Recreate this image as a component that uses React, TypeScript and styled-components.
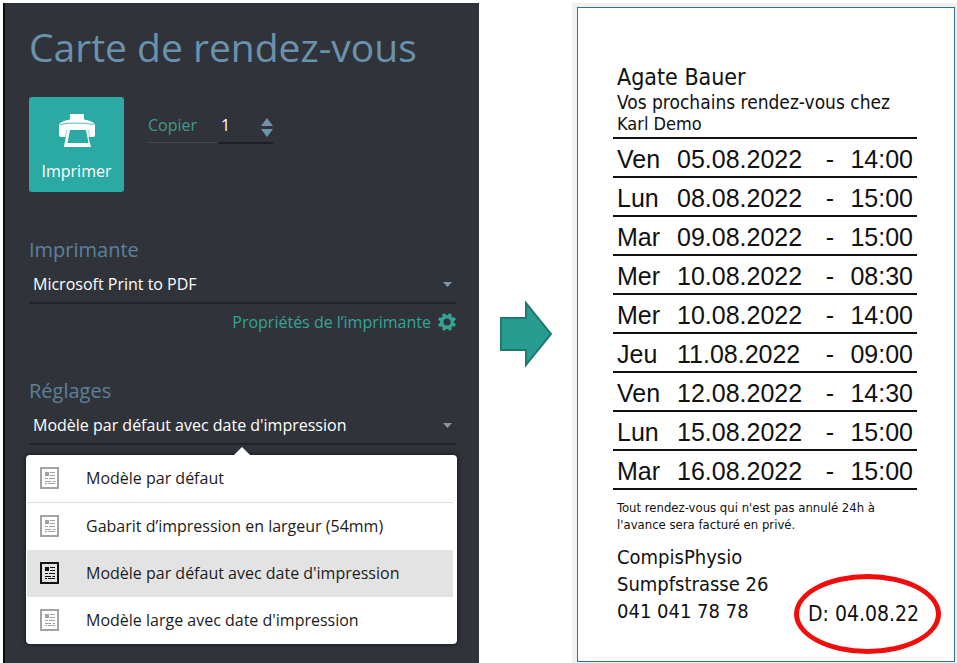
import React, { useState } from "react";
import styled, { createGlobalStyle } from "styled-components";

const GlobalStyle = createGlobalStyle`
  *, *::before, *::after { box-sizing: border-box; }
  body {
    margin: 0;
    background: #ffffff;
    font-family: "Open Sans", "Noto Sans", sans-serif;
  }
  button, input, select { font: inherit; color: inherit; }
`;

const Page = styled.div`
  display: grid;
  grid-template-columns: 476fr 93fr 385fr;
  min-height: 100vh;
  padding: 3px 0 0 3px;
`;

const Panel = styled.main`
  background: #30343a;
  border-left: 2px solid #0a0c0f;
  padding: 16px 23px 19px 24px;
`;

const Title = styled.h1`
  margin: 0;
  font-size: 39px;
  line-height: 56px;
  font-weight: 400;
  color: #6a92ad;
  white-space: nowrap;
`;

const PrintRow = styled.div`
  display: flex;
  align-items: flex-start;
  gap: 24px;
  margin-top: 22px;
`;

const PrintButton = styled.button`
  width: 95px;
  height: 95px;
  border: 0;
  border-radius: 3px;
  padding: 17px 0 9px;
  background: #2baaa3;
  color: #ffffff;
  display: flex;
  flex-direction: column;
  align-items: center;
  justify-content: space-between;
  font-size: 16px;
  line-height: 24px;
  cursor: pointer;
`;

const CopyField = styled.div`
  display: flex;
  align-items: stretch;
  height: 33px;
  margin-top: 14px;
  font-size: 16px;
  line-height: 28px;
`;

const CopyLabel = styled.label`
  width: 70px;
  height: 32px;
  color: #43968c;
  border-bottom: 1px solid #41454c;
`;

const CopyBox = styled.div`
  display: flex;
  align-items: flex-start;
  width: 55px;
  border-bottom: 2px solid #1d2025;
`;

const CopyInput = styled.input`
  flex: 1;
  width: 0;
  padding: 0 0 0 3px;
  border: 0;
  outline: 0;
  background: transparent;
  color: #ffffff;
  height: 28px;
`;

const Stepper = styled.div`
  display: flex;
  flex-direction: column;
  gap: 3px;
  padding-top: 7px;
`;

const StepButton = styled.button`
  border: 0;
  padding: 0;
  background: none;
  color: #6f94ac;
  display: flex;
  cursor: pointer;
`;

const FieldLabel = styled.label`
  display: block;
  font-size: 20px;
  line-height: 28px;
  color: #5d809b;
`;

const PrinterField = styled.section`
  margin-top: 44px;
`;

const SettingsField = styled.section`
  margin-top: 41px;
`;

const SelectBox = styled.div`
  display: flex;
  align-items: center;
  height: 40px;
  padding: 2px 4px 0;
  border-bottom: 2px solid #20242a;
  color: #7e98ab;
`;

const Select = styled.select`
  flex: 1;
  min-width: 0;
  height: 28px;
  appearance: none;
  border: 0;
  outline: 0;
  padding: 0;
  background: transparent;
  color: #ffffff;
  font-size: 16px;
  line-height: 28px;
`;

const PropertiesLink = styled.a`
  display: flex;
  justify-content: flex-end;
  align-items: center;
  gap: 7px;
  height: 28px;
  margin-top: 4px;
  font-size: 16px;
  line-height: 28px;
  color: #36a397;
  text-decoration: none;
`;

const Menu = styled.ul`
  position: relative;
  list-style: none;
  margin: 10px -1px 0 -3px;
  padding: 0 4px 0 1px;
  background: #ffffff;
  border-radius: 4px;
  box-shadow: 0 0 4px 1px rgba(0, 0, 0, 0.45);

  &::before {
    content: "";
    position: absolute;
    top: -8px;
    left: 50%;
    margin-left: -8px;
    border: 8px solid transparent;
    border-top: 0;
    border-bottom-color: #ffffff;
  }
`;

const MenuItem = styled.li<{ $divided?: boolean }>`
  border-bottom: ${(p) => (p.$divided ? "1px solid #dcdcdc" : "0")};
`;

const MenuButton = styled.button<{ $active: boolean }>`
  display: flex;
  align-items: center;
  gap: 26px;
  width: 100%;
  height: 47px;
  border: 0;
  padding: 0 12px 2px 13px;
  text-align: left;
  background: ${(p) => (p.$active ? "#e3e3e3" : "transparent")};
  color: #1c1c1c;
  font-size: 16px;
  line-height: 24px;
  cursor: pointer;

  svg { color: ${(p) => (p.$active ? "#111111" : "#a3a3a3")}; flex: none; }
`;

const ArrowCell = styled.div`
  padding: 297px 0 0 21px;
`;

const Preview = styled.section`
  background: #f3f1ef;
  padding: 4px 2px 1px 5px;
  display: flex;
`;

const Card = styled.article`
  flex: 1;
  border: 1px solid #2f6fa5;
  background: #ffffff;
  color: #111111;
  padding: 55px 37px 0 35px;
  font-family: "DejaVu Sans Condensed", "DejaVu Sans", sans-serif;
`;

const CardText = styled.p<{ $size: number; $line: number }>`
  margin: 0;
  padding-left: 4px;
  font-size: ${(p) => p.$size}px;
  line-height: ${(p) => p.$line}px;
  white-space: nowrap;
`;

const Appointments = styled.table`
  width: 100%;
  border-collapse: collapse;
  border-top: 2px solid #111111;
  margin: 2px 0 9px;
  font-family: "Liberation Sans", Arial, sans-serif;
  font-size: 25px;
  line-height: 34px;

  tr { border-bottom: 2px solid #111111; }
  td, th { padding: 3px 0 0; font-weight: 400; text-align: left; white-space: nowrap; }
  th { width: 64px; padding-left: 4px; }
  td:nth-child(3) { text-align: right; }
  td:nth-child(4) { text-align: right; width: 83px; padding-right: 4px; }
`;

const Footer = styled.footer`
  display: flex;
  justify-content: space-between;
  align-items: flex-start;
  margin-top: 11px;
  margin-right: -2px;
`;

const Address = styled.address`
  font-style: normal;
`;

const PrintDate = styled.div`
  position: relative;
  margin-top: 56px;
  font-size: 21px;
  line-height: 28px;
  white-space: nowrap;

  &::after {
    content: "";
    position: absolute;
    inset: -26px -22px -26px -14px;
    border: 5px solid #f20d0d;
    border-radius: 50%;
  }
`;

const PrinterIcon = () => (
  <svg width="36" height="33" viewBox="0 0 36 33" aria-hidden="true">
    <path d="M11 0h14v5.500c5 .8 9 2 11 5V21q0 2-2 2h-4.600L32 33H5l1.600-10H2q-2 0-2-2V10.500c2-3 6-4.200 11-5z" fill="#fff" />
    <path d="M1 10.600Q9 9 18 9t17 1.600" stroke="#2baaa3" strokeWidth="0.800" fill="none" />
    <path d="M11 16h16l2.500 13h-21z" fill="#2baaa3" />
    <path d="M7.500 16L5.800 28M29.500 16l1.700 12" stroke="#2baaa3" strokeWidth="0.500" />
  </svg>
);

const Triangle = ({ up = false, size = 12, height = 8 }: { up?: boolean; size?: number; height?: number }) => (
  <svg width={size} height={height} viewBox="0 0 12 8" preserveAspectRatio="none" aria-hidden="true">
    <path d={up ? "M0 8L6 0l6 8z" : "M0 0h12L6 8z"} fill="currentColor" />
  </svg>
);

const GearIcon = () => (
  <svg width="18" height="18" viewBox="0 0 18 18" aria-hidden="true">
    <circle cx="9" cy="9" r="5.300" fill="none" stroke="currentColor" strokeWidth="3.400" />
    {[22, 67, 112, 157, 202, 247, 292, 337].map((a) => (
      <path key={a} d="M7 3L7.600 0h2.800L11 3z" fill="currentColor" transform={`rotate(${a} 9 9)`} />
    ))}
  </svg>
);

const TemplateIcon = () => (
  <svg width="20" height="22" viewBox="0 0 20 22" aria-hidden="true">
    <rect x="1" y="1" width="17" height="20" fill="none" stroke="currentColor" strokeWidth="2" />
    <path d="M5 5h4v4H5z" fill="currentColor" />
    <path d="M10 5.500h5M10 8.500h5M5 11.500h3M9 11.500h6M5 14.500h6M12.500 14.500h2.500M5 16.500h2M8 16.500h7" stroke="currentColor" strokeWidth="1" />
  </svg>
);

const BigArrow = () => (
  <svg width="53" height="69" viewBox="0 0 53 69" aria-hidden="true">
    <path d="M1 18h25V3l25 31-25 31V50H1z" fill="#279c91" stroke="#1f7a70" strokeWidth="2" />
  </svg>
);

const templates = [
  "Modèle par défaut",
  "Gabarit d’impression en largeur (54mm)",
  "Modèle par défaut avec date d'impression",
  "Modèle large avec date d'impression",
];

const appointments = [
  ["Ven", "05.08.2022", "14:00"],
  ["Lun", "08.08.2022", "15:00"],
  ["Mar", "09.08.2022", "15:00"],
  ["Mer", "10.08.2022", "08:30"],
  ["Mer", "10.08.2022", "14:00"],
  ["Jeu", "11.08.2022", "09:00"],
  ["Ven", "12.08.2022", "14:30"],
  ["Lun", "15.08.2022", "15:00"],
  ["Mar", "16.08.2022", "15:00"],
];

export default function App() {
  const [copies, setCopies] = useState(1);
  const [template, setTemplate] = useState(templates[2]);

  return (
    <>
      <GlobalStyle />
      <Page>
        <Panel>
          <Title>Carte de rendez-vous</Title>
          <PrintRow>
            <PrintButton type="button">
              <PrinterIcon />
              Imprimer
            </PrintButton>
            <CopyField>
              <CopyLabel htmlFor="copies">Copier</CopyLabel>
              <CopyBox>
                <CopyInput
                  id="copies"
                  inputMode="numeric"
                  value={copies}
                  onChange={(e) => setCopies(Number(e.target.value) || 1)}
                />
                <Stepper>
                  <StepButton type="button" aria-label="Plus" onClick={() => setCopies(copies + 1)}>
                    <Triangle up />
                  </StepButton>
                  <StepButton type="button" aria-label="Moins" onClick={() => setCopies(Math.max(1, copies - 1))}>
                    <Triangle />
                  </StepButton>
                </Stepper>
              </CopyBox>
            </CopyField>
          </PrintRow>

          <PrinterField>
            <FieldLabel htmlFor="printer">Imprimante</FieldLabel>
            <SelectBox>
              <Select id="printer">
                <option>Microsoft Print to PDF</option>
              </Select>
              <Triangle size={9} height={5} />
            </SelectBox>
            <PropertiesLink href="#printer">
              Propriétés de l’imprimante
              <GearIcon />
            </PropertiesLink>
          </PrinterField>

          <SettingsField>
            <FieldLabel htmlFor="template">Réglages</FieldLabel>
            <SelectBox>
              <Select id="template" value={template} onChange={(e) => setTemplate(e.target.value)}>
                {templates.map((t) => (
                  <option key={t}>{t}</option>
                ))}
              </Select>
              <Triangle size={9} height={5} />
            </SelectBox>
            <Menu>
              {templates.map((t, i) => (
                <MenuItem key={t} $divided={i === 0}>
                  <MenuButton type="button" $active={t === template} onClick={() => setTemplate(t)}>
                    <TemplateIcon />
                    {t}
                  </MenuButton>
                </MenuItem>
              ))}
            </Menu>
          </SettingsField>
        </Panel>

        <ArrowCell>
          <BigArrow />
        </ArrowCell>

        <Preview>
          <Card>
            <CardText $size={23} $line={28}>Agate Bauer</CardText>
            <CardText $size={19} $line={22}>Vos prochains rendez-vous chez</CardText>
            <CardText $size={18} $line={22}>Karl Demo</CardText>
            <Appointments>
              <tbody>
                {appointments.map(([day, date, time]) => (
                  <tr key={date + time}>
                    <th scope="row">{day}</th>
                    <td>{date}</td>
                    <td>-</td>
                    <td>{time}</td>
                  </tr>
                ))}
              </tbody>
            </Appointments>
            <CardText $size={13} $line={17}>Tout rendez-vous qui n'est pas annulé 24h à</CardText>
            <CardText $size={13} $line={17}>l'avance sera facturé en privé.</CardText>
            <Footer>
              <Address>
                <CardText $size={20} $line={27}>CompisPhysio</CardText>
                <CardText $size={20} $line={27}>Sumpfstrasse 26</CardText>
                <CardText $size={20} $line={27}>041 041 78 78</CardText>
              </Address>
              <PrintDate>D: 04.08.22</PrintDate>
            </Footer>
          </Card>
        </Preview>
      </Page>
    </>
  );
}
